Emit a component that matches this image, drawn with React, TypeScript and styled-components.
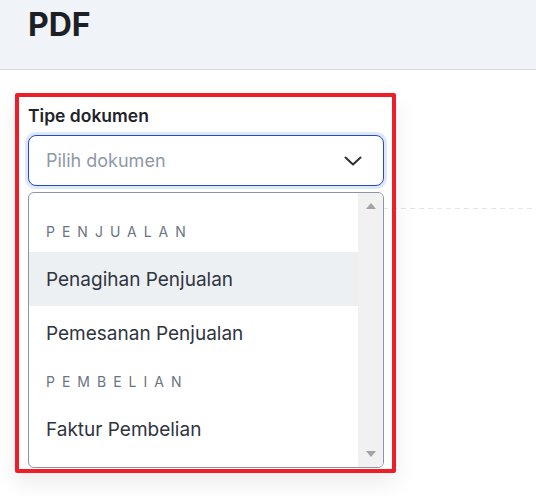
import styled, { createGlobalStyle } from "styled-components";

// one option row in the dropdown
interface IOption {
  label: string;
  active?: boolean;
}

interface IGroup {
  title: string;
  options: IOption[];
}

const groups: IGroup[] = [
  {
    title: "Penjualan",
    options: [
      { label: "Penagihan Penjualan", active: true },
      { label: "Pemesanan Penjualan" },
    ],
  },
  {
    title: "Pembelian",
    options: [{ label: "Faktur Pembelian" }],
  },
];

function App() {
  return (
    <>
      <GlobalStyle />
      <Page>
        <Header>
          <Title>PDF</Title>
        </Header>
        <Content>
          <Rule />
          <Frame>
            <Label>Tipe dokumen</Label>
            <SelectWrap>
              <Select>
                <Placeholder>Pilih dokumen</Placeholder>
                <svg width="18" height="10" viewBox="0 0 18 10" fill="none">
                  <path
                    d="M1.5 1.5 L9 8.5 L16.5 1.5"
                    stroke="#2b2f36"
                    strokeWidth="2"
                    strokeLinecap="round"
                    strokeLinejoin="round"
                  />
                </svg>
              </Select>
              <Menu>
                <OptionList>
                  {groups.map((group) => (
                    <li key={group.title}>
                      <GroupTitle>{group.title}</GroupTitle>
                      {group.options.map((opt) => (
                        <Option key={opt.label} active={opt.active}>
                          {opt.label}
                        </Option>
                      ))}
                    </li>
                  ))}
                </OptionList>
                <ScrollTrack>
                  <ScrollArrow>
                    <Triangle up />
                  </ScrollArrow>
                  <ScrollArrow>
                    <Triangle />
                  </ScrollArrow>
                </ScrollTrack>
              </Menu>
            </SelectWrap>
          </Frame>
        </Content>
      </Page>
    </>
  );
}

const GlobalStyle = createGlobalStyle`
  body {
    margin: 0;
    background: #ffffff;
    font-family: Inter, "Noto Sans", sans-serif;
  }
  ul {
    margin: 0;
    padding: 0;
    list-style: none;
  }
`;

const Page = styled.div`
  width: 536px;
  height: 496px;
  overflow: hidden;
`;

const Header = styled.header`
  height: 70px;
  padding: 5px 28px 0;
  box-sizing: border-box;
  background: #f0f4f9;
  border-bottom: 1px solid #d5dae2;
`;

const Title = styled.h1`
  margin: 0;
  font-size: 32px;
  line-height: 40px;
  font-weight: 700;
  color: #1c1f24;
`;

const Content = styled.main`
  display: grid;
  padding: 23px 0 0 15px;
`;

const Rule = styled.div`
  grid-area: 1 / 1;
  align-self: start;
  height: 1px;
  margin: 115px 0 0 368px;
  background-image: repeating-linear-gradient(
    to right,
    #e2e5e9 0 5px,
    transparent 5px 9px
  );
`;

const Frame = styled.section`
  grid-area: 1 / 1;
  justify-self: start;
  width: 381px;
  height: 380px;
  box-sizing: border-box;
  padding: 8px 8px 0 9px;
  border: 4px solid #ef1d27;
  border-radius: 2px;
  box-shadow: 0 10px 22px rgba(0, 0, 0, 0.08);
  position: relative;
  z-index: 1;
`;

const Label = styled.label`
  display: block;
  margin-bottom: 9px;
  font-size: 17.5px;
  line-height: 21px;
  font-weight: 600;
  color: #1f2329;
`;

const SelectWrap = styled.div`
  position: relative;
`;

const Select = styled.div`
  height: 51px;
  box-sizing: border-box;
  display: flex;
  align-items: center;
  justify-content: space-between;
  padding: 0 21px 0 17px;
  border: 1px solid #2448d6;
  border-radius: 8px;
  box-shadow: 0 0 0 3px #dde8fd;
  background: #ffffff;
`;

const Placeholder = styled.span`
  font-size: 18px;
  color: #8e98a8;
`;

const Menu = styled.div`
  position: absolute;
  top: calc(100% + 6px);
  left: 0;
  right: 0;
  height: 276px;
  box-sizing: border-box;
  display: flex;
  border: 1px solid #8d95a3;
  border-radius: 6px;
  background: #ffffff;
  overflow: hidden;
`;

const OptionList = styled.ul`
  flex: 1;
  padding-top: 17px;
`;

const GroupTitle = styled.div`
  height: 42px;
  display: flex;
  align-items: center;
  padding-left: 17px;
  font-size: 14px;
  letter-spacing: 7px;
  text-transform: uppercase;
  color: #6b7482;
`;

const Option = styled.div<{ active?: boolean }>`
  height: 54px;
  display: flex;
  align-items: center;
  padding-left: 17px;
  font-size: 19px;
  color: #2f3540;
  background: ${(props) => (props.active ? "#edf0f3" : "transparent")};
`;

const ScrollTrack = styled.div`
  width: 25px;
  display: flex;
  flex-direction: column;
  justify-content: space-between;
  background: #f1f1f1;
`;

const ScrollArrow = styled.div`
  height: 26px;
  display: flex;
  align-items: center;
  justify-content: center;
`;

const Triangle = styled.span<{ up?: boolean }>`
  width: 0;
  height: 0;
  border-left: 5px solid transparent;
  border-right: 5px solid transparent;
  ${(props) =>
    props.up
      ? "border-bottom: 6px solid #a3a3a3;"
      : "border-top: 6px solid #a3a3a3;"}
`;

export default App;
